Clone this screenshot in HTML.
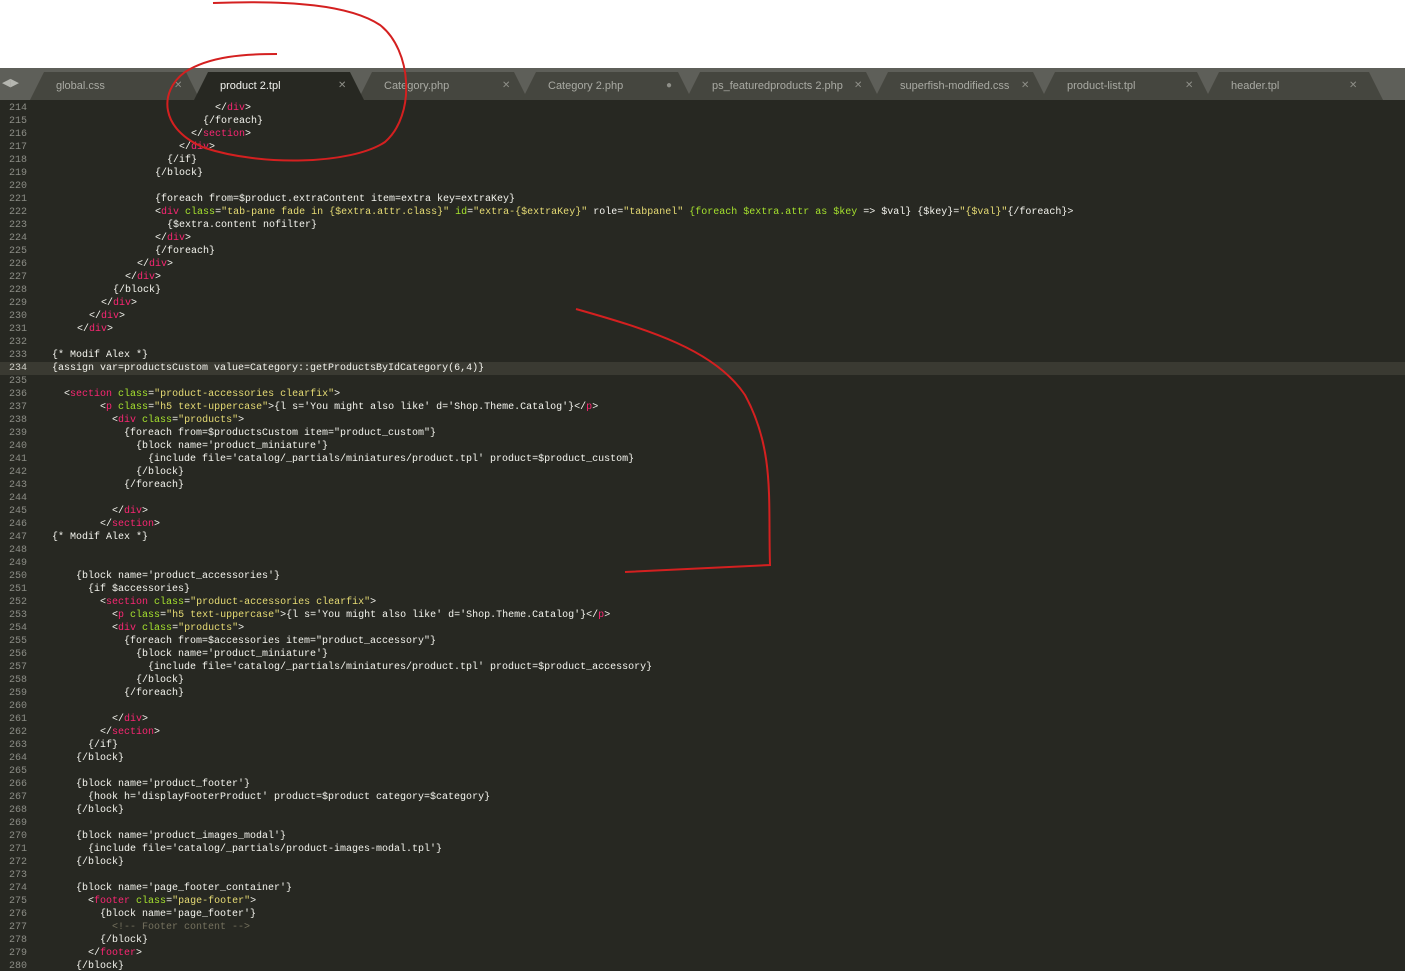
<!DOCTYPE html>
<html><head><meta charset="utf-8"><style>
*{margin:0;padding:0;box-sizing:border-box}
html,body{width:1405px;height:971px;overflow:hidden;background:#fff}
#bar{position:absolute;left:0;top:68px;width:1405px;height:32px;background:#5e5f59}
.tab{position:absolute;top:4px;height:28px;background:#45463f;clip-path:polygon(14px 0,calc(100% - 14px) 0,100% 100%,0 100%);font:11px "Liberation Sans",sans-serif;color:#a9aaa3}
.tab.act{background:#272822;color:#f2f2ee}
.tab .l{position:absolute;top:8px}
.tab .x{position:absolute;top:8px;font-size:10px;color:#8e8f88}
.arr{position:absolute;top:76px;color:#b5b6b0;font:11px "Liberation Sans",sans-serif}
#ed{position:absolute;left:0;top:100px;width:1405px;height:871px;background:#272822;font:10px/13px "Liberation Mono",monospace;color:#f4f4ee;padding-top:2px}
.ln{position:relative;height:13px;line-height:13px}
.n{position:absolute;left:0;width:27px;text-align:right;color:#8c8d86}
.c{position:absolute;white-space:pre}
.g{position:absolute;left:40px;height:13px;background:repeating-linear-gradient(90deg,transparent 0 12px,#3a3b34 12px 13px,transparent 13px 12px);background-size:12px 13px}
.hl{background:#3a3a32}
.hl .n{color:#d0d0c8}
.t{color:#f92672}.a{color:#a6e22e}.s{color:#e6db74}.m{color:#75715e}
svg{position:absolute;left:0;top:0}
</style></head><body>
<div id="bar">
<div class="arr" style="left:2px;top:8px">&#9664;&#9654;</div>
<div class="tab" style="left:30px;width:170px"><span class="l" style="left:26px">global.css</span><span class="x" style="left:144px">✕</span></div>
<div class="tab" style="left:358px;width:170px"><span class="l" style="left:26px">Category.php</span><span class="x" style="left:144px">✕</span></div>
<div class="tab" style="left:522px;width:170px"><span class="l" style="left:26px">Category 2.php</span><span class="x" style="left:144px">●</span></div>
<div class="tab" style="left:686px;width:194px"><span class="l" style="left:26px">ps_featuredproducts 2.php</span><span class="x" style="left:168px">✕</span></div>
<div class="tab" style="left:874px;width:173px"><span class="l" style="left:26px">superfish-modified.css</span><span class="x" style="left:147px">✕</span></div>
<div class="tab" style="left:1041px;width:170px"><span class="l" style="left:26px">product-list.tpl</span><span class="x" style="left:144px">✕</span></div>
<div class="tab" style="left:1205px;width:178px"><span class="l" style="left:26px">header.tpl</span><span class="x" style="left:144px">✕</span></div>
<div class="tab act" style="left:194px;width:170px"><span class="l" style="left:26px">product 2.tpl</span><span class="x" style="left:144px">✕</span></div>
</div>
<div id="ed">
<div class="ln"><span class="n">214</span><span class="g" style="width:175px"></span><span class="c" style="left:215px">&lt;/<span class="t">div</span>&gt;</span></div>
<div class="ln"><span class="n">215</span><span class="g" style="width:163px"></span><span class="c" style="left:203px">{/foreach}</span></div>
<div class="ln"><span class="n">216</span><span class="g" style="width:151px"></span><span class="c" style="left:191px">&lt;/<span class="t">section</span>&gt;</span></div>
<div class="ln"><span class="n">217</span><span class="g" style="width:139px"></span><span class="c" style="left:179px">&lt;/<span class="t">div</span>&gt;</span></div>
<div class="ln"><span class="n">218</span><span class="g" style="width:127px"></span><span class="c" style="left:167px">{/if}</span></div>
<div class="ln"><span class="n">219</span><span class="g" style="width:115px"></span><span class="c" style="left:155px">{/block}</span></div>
<div class="ln"><span class="n">220</span><span class="g" style="width:115px"></span></div>
<div class="ln"><span class="n">221</span><span class="g" style="width:115px"></span><span class="c" style="left:155px">{foreach from=$product.extraContent item=extra key=extraKey}</span></div>
<div class="ln"><span class="n">222</span><span class="g" style="width:115px"></span><span class="c" style="left:155px">&lt;<span class="t">div</span> <span class="a">class</span>=<span class="s">"tab-pane fade in {$extra.attr.class}"</span> <span class="a">id</span>=<span class="s">"extra-{$extraKey}"</span> role=<span class="s">"tabpanel"</span> <span class="a">{foreach $extra.attr as $key</span> =&gt; $val} {$key}=<span class="s">"{$val}"</span>{/foreach}&gt;</span></div>
<div class="ln"><span class="n">223</span><span class="g" style="width:127px"></span><span class="c" style="left:167px">{$extra.content nofilter}</span></div>
<div class="ln"><span class="n">224</span><span class="g" style="width:115px"></span><span class="c" style="left:155px">&lt;/<span class="t">div</span>&gt;</span></div>
<div class="ln"><span class="n">225</span><span class="g" style="width:115px"></span><span class="c" style="left:155px">{/foreach}</span></div>
<div class="ln"><span class="n">226</span><span class="g" style="width:97px"></span><span class="c" style="left:137px">&lt;/<span class="t">div</span>&gt;</span></div>
<div class="ln"><span class="n">227</span><span class="g" style="width:85px"></span><span class="c" style="left:125px">&lt;/<span class="t">div</span>&gt;</span></div>
<div class="ln"><span class="n">228</span><span class="g" style="width:73px"></span><span class="c" style="left:113px">{/block}</span></div>
<div class="ln"><span class="n">229</span><span class="g" style="width:61px"></span><span class="c" style="left:101px">&lt;/<span class="t">div</span>&gt;</span></div>
<div class="ln"><span class="n">230</span><span class="g" style="width:49px"></span><span class="c" style="left:89px">&lt;/<span class="t">div</span>&gt;</span></div>
<div class="ln"><span class="n">231</span><span class="g" style="width:37px"></span><span class="c" style="left:77px">&lt;/<span class="t">div</span>&gt;</span></div>
<div class="ln"><span class="n">232</span></div>
<div class="ln"><span class="n">233</span><span class="c" style="left:52px">{* Modif Alex *}</span></div>
<div class="ln hl"><span class="n">234</span><span class="c" style="left:52px">{assign var=productsCustom value=Category::getProductsByIdCategory(6,4)}</span></div>
<div class="ln"><span class="n">235</span><span class="g" style="width:24px"></span></div>
<div class="ln"><span class="n">236</span><span class="g" style="width:24px"></span><span class="c" style="left:64px">&lt;<span class="t">section</span> <span class="a">class</span>=<span class="s">"product-accessories clearfix"</span>&gt;</span></div>
<div class="ln"><span class="n">237</span><span class="g" style="width:60px"></span><span class="c" style="left:100px">&lt;<span class="t">p</span> <span class="a">class</span>=<span class="s">"h5 text-uppercase"</span>&gt;{l s='You might also like' d='Shop.Theme.Catalog'}&lt;/<span class="t">p</span>&gt;</span></div>
<div class="ln"><span class="n">238</span><span class="g" style="width:72px"></span><span class="c" style="left:112px">&lt;<span class="t">div</span> <span class="a">class</span>=<span class="s">"products"</span>&gt;</span></div>
<div class="ln"><span class="n">239</span><span class="g" style="width:84px"></span><span class="c" style="left:124px">{foreach from=$productsCustom item="product_custom"}</span></div>
<div class="ln"><span class="n">240</span><span class="g" style="width:96px"></span><span class="c" style="left:136px">{block name='product_miniature'}</span></div>
<div class="ln"><span class="n">241</span><span class="g" style="width:108px"></span><span class="c" style="left:148px">{include file='catalog/_partials/miniatures/product.tpl' product=$product_custom}</span></div>
<div class="ln"><span class="n">242</span><span class="g" style="width:96px"></span><span class="c" style="left:136px">{/block}</span></div>
<div class="ln"><span class="n">243</span><span class="g" style="width:84px"></span><span class="c" style="left:124px">{/foreach}</span></div>
<div class="ln"><span class="n">244</span><span class="g" style="width:72px"></span></div>
<div class="ln"><span class="n">245</span><span class="g" style="width:72px"></span><span class="c" style="left:112px">&lt;/<span class="t">div</span>&gt;</span></div>
<div class="ln"><span class="n">246</span><span class="g" style="width:60px"></span><span class="c" style="left:100px">&lt;/<span class="t">section</span>&gt;</span></div>
<div class="ln"><span class="n">247</span><span class="c" style="left:52px">{* Modif Alex *}</span></div>
<div class="ln"><span class="n">248</span></div>
<div class="ln"><span class="n">249</span></div>
<div class="ln"><span class="n">250</span><span class="g" style="width:36px"></span><span class="c" style="left:76px">{block name='product_accessories'}</span></div>
<div class="ln"><span class="n">251</span><span class="g" style="width:48px"></span><span class="c" style="left:88px">{if $accessories}</span></div>
<div class="ln"><span class="n">252</span><span class="g" style="width:60px"></span><span class="c" style="left:100px">&lt;<span class="t">section</span> <span class="a">class</span>=<span class="s">"product-accessories clearfix"</span>&gt;</span></div>
<div class="ln"><span class="n">253</span><span class="g" style="width:72px"></span><span class="c" style="left:112px">&lt;<span class="t">p</span> <span class="a">class</span>=<span class="s">"h5 text-uppercase"</span>&gt;{l s='You might also like' d='Shop.Theme.Catalog'}&lt;/<span class="t">p</span>&gt;</span></div>
<div class="ln"><span class="n">254</span><span class="g" style="width:72px"></span><span class="c" style="left:112px">&lt;<span class="t">div</span> <span class="a">class</span>=<span class="s">"products"</span>&gt;</span></div>
<div class="ln"><span class="n">255</span><span class="g" style="width:84px"></span><span class="c" style="left:124px">{foreach from=$accessories item="product_accessory"}</span></div>
<div class="ln"><span class="n">256</span><span class="g" style="width:96px"></span><span class="c" style="left:136px">{block name='product_miniature'}</span></div>
<div class="ln"><span class="n">257</span><span class="g" style="width:108px"></span><span class="c" style="left:148px">{include file='catalog/_partials/miniatures/product.tpl' product=$product_accessory}</span></div>
<div class="ln"><span class="n">258</span><span class="g" style="width:96px"></span><span class="c" style="left:136px">{/block}</span></div>
<div class="ln"><span class="n">259</span><span class="g" style="width:84px"></span><span class="c" style="left:124px">{/foreach}</span></div>
<div class="ln"><span class="n">260</span><span class="g" style="width:72px"></span></div>
<div class="ln"><span class="n">261</span><span class="g" style="width:72px"></span><span class="c" style="left:112px">&lt;/<span class="t">div</span>&gt;</span></div>
<div class="ln"><span class="n">262</span><span class="g" style="width:60px"></span><span class="c" style="left:100px">&lt;/<span class="t">section</span>&gt;</span></div>
<div class="ln"><span class="n">263</span><span class="g" style="width:48px"></span><span class="c" style="left:88px">{/if}</span></div>
<div class="ln"><span class="n">264</span><span class="g" style="width:36px"></span><span class="c" style="left:76px">{/block}</span></div>
<div class="ln"><span class="n">265</span><span class="g" style="width:36px"></span></div>
<div class="ln"><span class="n">266</span><span class="g" style="width:36px"></span><span class="c" style="left:76px">{block name='product_footer'}</span></div>
<div class="ln"><span class="n">267</span><span class="g" style="width:48px"></span><span class="c" style="left:88px">{hook h='displayFooterProduct' product=$product category=$category}</span></div>
<div class="ln"><span class="n">268</span><span class="g" style="width:36px"></span><span class="c" style="left:76px">{/block}</span></div>
<div class="ln"><span class="n">269</span><span class="g" style="width:36px"></span></div>
<div class="ln"><span class="n">270</span><span class="g" style="width:36px"></span><span class="c" style="left:76px">{block name='product_images_modal'}</span></div>
<div class="ln"><span class="n">271</span><span class="g" style="width:48px"></span><span class="c" style="left:88px">{include file='catalog/_partials/product-images-modal.tpl'}</span></div>
<div class="ln"><span class="n">272</span><span class="g" style="width:36px"></span><span class="c" style="left:76px">{/block}</span></div>
<div class="ln"><span class="n">273</span><span class="g" style="width:36px"></span></div>
<div class="ln"><span class="n">274</span><span class="g" style="width:36px"></span><span class="c" style="left:76px">{block name='page_footer_container'}</span></div>
<div class="ln"><span class="n">275</span><span class="g" style="width:48px"></span><span class="c" style="left:88px">&lt;<span class="t">footer</span> <span class="a">class</span>=<span class="s">"page-footer"</span>&gt;</span></div>
<div class="ln"><span class="n">276</span><span class="g" style="width:60px"></span><span class="c" style="left:100px">{block name='page_footer'}</span></div>
<div class="ln"><span class="n">277</span><span class="g" style="width:72px"></span><span class="c m" style="left:112px">&lt;!-- Footer content --&gt;</span></div>
<div class="ln"><span class="n">278</span><span class="g" style="width:60px"></span><span class="c" style="left:100px">{/block}</span></div>
<div class="ln"><span class="n">279</span><span class="g" style="width:48px"></span><span class="c" style="left:88px">&lt;/<span class="t">footer</span>&gt;</span></div>
<div class="ln"><span class="n">280</span><span class="g" style="width:36px"></span><span class="c" style="left:76px">{/block}</span></div>
</div>
<svg width="1405" height="971" viewBox="0 0 1405 971">
<path d="M213,3 C290,0 350,5 380,25 C412,50 416,115 385,142 C350,165 260,166 205,148 C160,130 158,92 185,72 C210,56 245,54 277,54" fill="none" stroke="#d42020" stroke-width="2"/>
<path d="M576,309 C650,330 715,350 745,395 C775,450 768,500 770,565 L625,572" fill="none" stroke="#d42020" stroke-width="2"/>
</svg>
</body></html>
